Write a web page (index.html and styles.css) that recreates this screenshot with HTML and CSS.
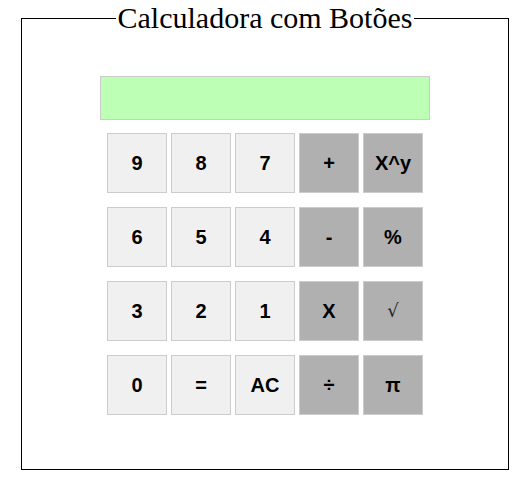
FILE: index.html
```html
<!DOCTYPE html>
<html lang="pt">
<head>
<meta charset="utf-8">
<title>Calculadora com Botões</title>
<link rel="stylesheet" href="styles.css">
</head>
<body>
<fieldset class="frame">
  <legend class="title">Calculadora com Botões</legend>
  <div class="calc">
    <div class="display"></div>
    <div class="keys">
      <button class="key">9</button>
      <button class="key">8</button>
      <button class="key">7</button>
      <button class="key op">+</button>
      <button class="key op">X^y</button>
      <button class="key">6</button>
      <button class="key">5</button>
      <button class="key">4</button>
      <button class="key op">-</button>
      <button class="key op">%</button>
      <button class="key">3</button>
      <button class="key">2</button>
      <button class="key">1</button>
      <button class="key op">X</button>
      <button class="key op sqrt">√</button>
      <button class="key">0</button>
      <button class="key">=</button>
      <button class="key">AC</button>
      <button class="key op">÷</button>
      <button class="key op">π</button>
    </div>
  </div>
</fieldset>
</body>
</html>
```
FILE: styles.css
```css
html, body {
  margin: 0;
  padding: 0;
  background: #ffffff;
}

body {
  font-family: "Liberation Serif", serif;
}

.frame {
  box-sizing: border-box;
  width: 488px;
  margin: 1px 0 0 21px;
  padding: 0;
  border: 1px solid #000000;
}

.title {
  margin: 0 auto;
  padding: 0 2px;
  font-family: "Liberation Serif", serif;
  font-size: 30px;
  color: #000000;
}

.calc {
  display: flex;
  flex-direction: column;
  align-items: center;
  padding: 41px 0 54px;
}

.display {
  box-sizing: border-box;
  width: 330px;
  height: 44px;
  border: 1px solid #cccccc;
  background: #bdffb4;
  margin-bottom: 13px;
}

.keys {
  display: grid;
  grid-template-columns: repeat(5, 60px);
  grid-auto-rows: 60px;
  column-gap: 4px;
  row-gap: 14px;
}

.key {
  box-sizing: border-box;
  width: 60px;
  height: 60px;
  margin: 0;
  padding: 0;
  border: 1px solid #cccccc;
  background: #f0f0f0;
  color: #000000;
  font-family: "Liberation Sans", Arial, sans-serif;
  font-weight: bold;
  font-size: 20px;
  line-height: 1;
}

.op {
  background: #b0b0b0;
}

.sqrt {
  font-family: "DejaVu Serif", serif;
  font-weight: normal;
  font-size: 18px;
  color: #222222;
}
```
